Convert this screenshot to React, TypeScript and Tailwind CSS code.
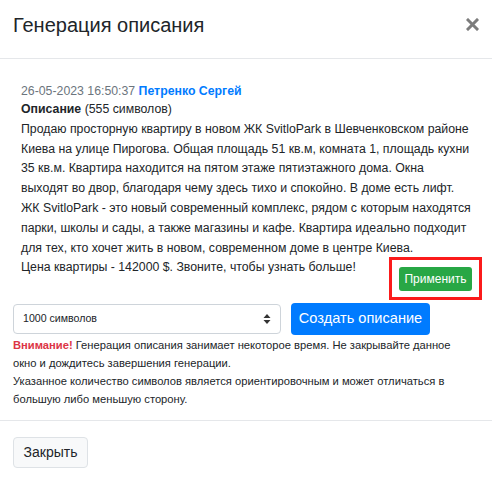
import React from "react";

const lines = [
  "Продаю просторную квартиру в новом ЖК SvitloPark в Шевченковском районе",
  "Киева на улице Пирогова. Общая площадь 51 кв.м, комната 1, площадь кухни",
  "35 кв.м. Квартира находится на пятом этаже пятиэтажного дома. Окна",
  "выходят во двор, благодаря чему здесь тихо и спокойно. В доме есть лифт.",
  "ЖК SvitloPark - это новый современный комплекс, рядом с которым находятся",
  "парки, школы и сады, а также магазины и кафе. Квартира идеально подходит",
  "для тех, кто хочет жить в новом, современном доме в центре Киева.",
  "Цена квартиры - 142000 $. Звоните, чтобы узнать больше!",
];

export default function App() {
  return (
    <div
      className="w-[492px] h-[478px] bg-white text-[#212529] overflow-hidden"
      style={{ fontFamily: '"Liberation Sans", Arial, sans-serif' }}
    >
      <div className="h-[59px] border-b border-[#e5e7ea] flex items-start justify-between pl-[13px] pr-[13px] pt-[12px]">
        <h5 className="text-[20px] leading-[26px] font-normal">Генерация описания</h5>
        <svg width="13" height="13" viewBox="0 0 13 13" className="mt-[6px]">
          <path d="M2 2 L11 11 M11 2 L2 11" stroke="#7c7c7c" strokeWidth="3" strokeLinecap="square" />
        </svg>
      </div>

      <div className="pt-[23px]">
        <div className="px-[21px]">
          <div className="text-[12.3px] leading-[18px]">
            <span className="text-[#6c757d]">26-05-2023 16:50:37</span>{" "}
            <span className="font-bold text-[#007bff]">Петренко Сергей</span>
          </div>
          <div className="text-[12.3px] leading-[19.8px]">
            <div>
              <b>Описание</b> (555 символов)
            </div>
            {lines.map((l) => (
              <div key={l} className="whitespace-nowrap">{l}</div>
            ))}
          </div>
        </div>
        <div className="flex justify-end pr-[10px] mt-[-21px]">
          <div className="border-[3px] border-[#fb1b1b] px-[7px] py-[6px]">
            <button className="h-[24px] w-[73px] rounded-[3px] bg-[#28a745] text-white text-[12px] leading-[24px]">
              Применить
            </button>
          </div>
        </div>

        <div className="px-[13px] mt-[3px] flex items-center gap-[10px]">
          <div className="w-[268px] h-[30px] border border-[#ced4da] rounded-[4px] flex items-center justify-between pl-[9px] pr-[9px]">
            <span className="text-[10.6px]">1000 символов</span>
            <svg width="8" height="12" viewBox="0 0 8 12">
              <path d="M4 1 L7.5 5 L0.5 5 Z M4 11 L7.5 7 L0.5 7 Z" fill="#333" />
            </svg>
          </div>
          <button className="w-[139px] h-[32px] rounded-[4px] bg-[#007bff] text-white text-[14.6px]">
            Создать описание
          </button>
        </div>

        <div className="px-[13px] mt-[1px] text-[11.2px] leading-[18px]">
          <div>
            <b className="text-[#dc3545]">Внимание!</b> Генерация описания занимает некоторое время. Не закрывайте данное
          </div>
          <div>окно и дождитесь завершения генерации.</div>
          <div>Указанное количество символов является ориентировочным и может отличаться в</div>
          <div>большую либо меньшую сторону.</div>
        </div>
      </div>

      <div className="mt-[12px] border-t border-[#e5e7ea] pt-[16px] px-[13px]">
        <button className="h-[31px] w-[75px] rounded-[4px] bg-[#f8f9fa] border border-[#dee2e6] text-[14px] text-[#212529]">
          Закрыть
        </button>
      </div>
    </div>
  );
}
